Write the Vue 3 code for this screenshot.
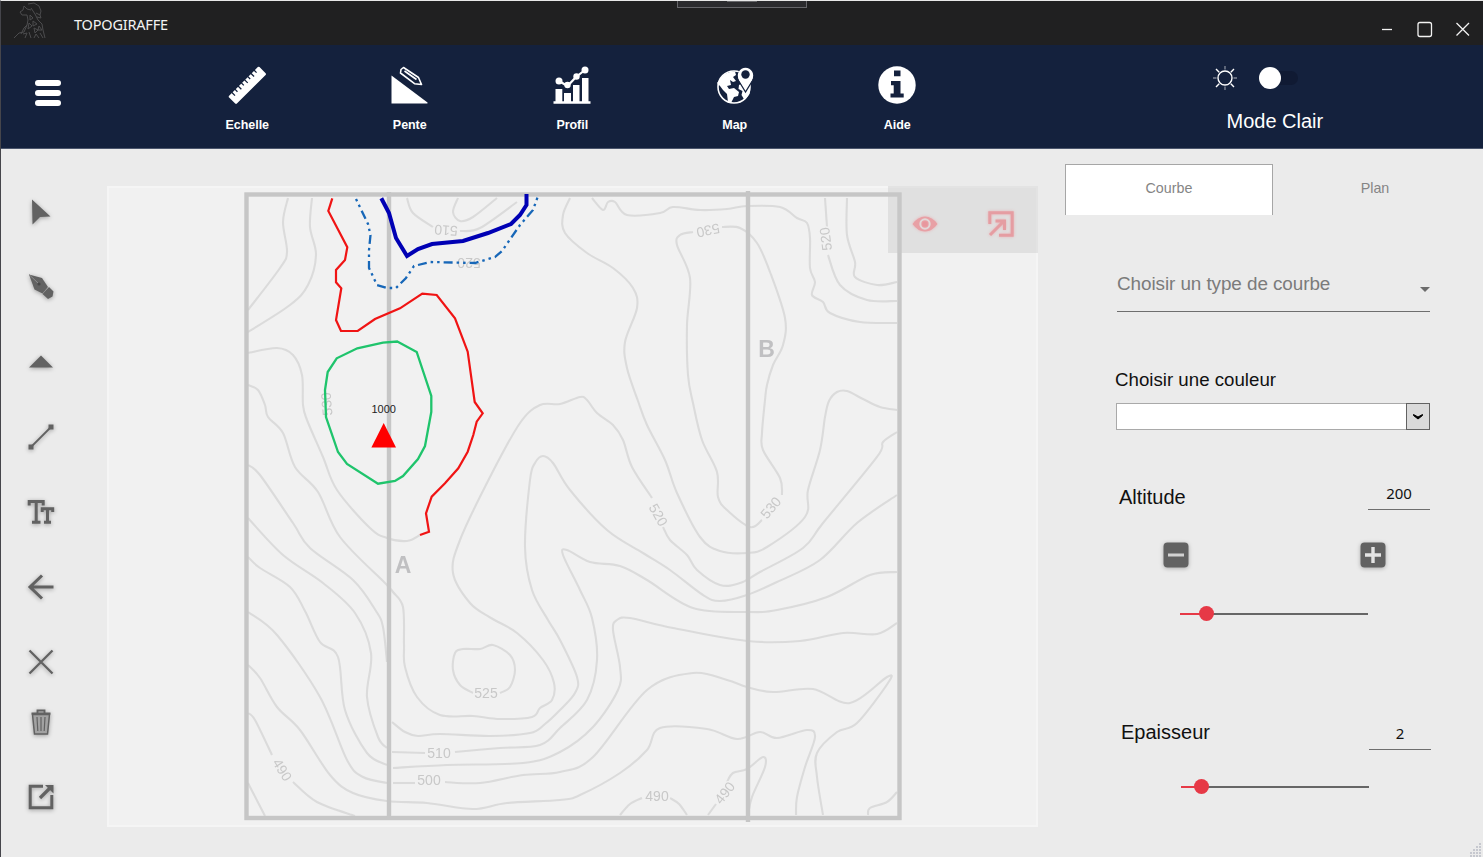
<script setup>
import { ref } from 'vue'

const altitude = ref(200)
const thickness = ref(2)
const activeTab = ref('Courbe')
const tabs = ['Courbe', 'Plan']
const nav = ['Echelle', 'Pente', 'Profil', 'Map', 'Aide']
const tools = ['select', 'pen', 'peak', 'line', 'text', 'back', 'cross', 'trash', 'export']

// Terrain contours, one "x,y x,y ..." list per curve
const terrain = [
  '288,198 283,222 287,252 280,268 248,310',
  '312,198 310,227 316,255 308,285 290,305 248,332',
  '248,353 277,348 293,355 302,375 303,405 307,420 323,457 337,490 370,528 387,538 407,541 420,535',
  '248,385 258,390 265,405 268,417 283,433 295,467 318,492 340,537 385,583 393,592 403,607 404,645 405,667 417,697 440,715 473,716 500,719 532,717 540,708 552,700 554,683 543,660 517,633 491,618 470,603 453,573 460,540 490,477 520,423 540,405 560,404 580,397 587,400 597,413 613,425 623,440 632,467 652,498',
  '663,527 670,540 687,555 697,570 720,585 740,583 760,572 803,548 823,523 877,457 883,442 897,432',
  '248,465 260,475 293,523 310,548 353,580 376,611 383,627 387,662',
  '392,722 405,732 418,736 440,734 490,736 530,733 545,724 560,710 575,693 577,677 560,640 548,620 532,590 525,547 530,480 535,463 543,456 553,463 570,490 607,530 643,553 670,570 703,595 720,601 747,595 777,582 820,560 857,523 897,495',
  '248,518 283,555 323,583 355,613 371,653 367,697 378,737 387,748',
  '392,752 425,753',
  '455,752 500,748 540,745 560,728 587,700 597,660 592,618 580,590 563,555 567,550 590,562 620,566 647,580 693,608 747,612 777,610 827,597 870,575 897,572',
  '248,557 260,568 290,587 305,611 320,642 338,657 345,710 367,753 387,765',
  '393,768 447,765 523,763 560,752 593,727 618,690 620,667 613,630 617,620 630,618 673,628 747,641 800,641 843,633 877,634 897,623',
  '248,612 277,635 320,697 347,760 363,777 387,783',
  '393,783 415,783',
  '445,782 480,783 523,775 560,772 593,757 647,690 693,673 727,680 747,687 773,692 813,689 850,703 887,677 888,683 857,723 837,732 817,753 817,777 823,815',
  '248,665 260,678 277,707 300,730 330,775 353,793 387,801 427,803 473,809 507,803 560,800 580,795 620,773 647,750 660,728 707,729 737,739 760,732 777,738 807,730 815,737 805,767 797,797 796,815',
  '248,713 255,720 272,755',
  '293,782 317,802 355,816',
  '248,783 265,816',
  '620,815 630,804 642,798',
  '670,798 679,804 687,815',
  '708,815 716,804',
  '727,782 733,773 747,769 763,757 765,767 752,797 748,815',
  '868,815 870,808 887,802 897,792',
  '473,693 460,685 453,670 455,653 463,649 480,649 493,645 510,655 515,670 510,687 500,693',
  '407,198 413,213 433,227',
  '460,231 480,228 517,202',
  '458,198 453,212 460,221 473,217 497,198',
  '570,198 563,215 565,233 587,253 613,268 633,288 637,308 625,342 627,368 638,401 647,425 665,460 677,493 700,537 720,551 747,553 767,547 805,517 808,490 820,450 825,417 829,401 837,392 847,391 863,399 880,407 897,410',
  '592,198 603,210 608,202 615,202 627,215 660,213 673,207 700,210 727,209 747,206 780,207 797,218 807,223 810,238 810,268 815,282 812,295 823,302 830,313 860,322 897,323',
  '693,232 680,235 677,245 690,278 687,325 688,375 693,403 702,440 717,472 718,497 727,510 750,527 762,520',
  '782,495 780,478 763,450 762,433 765,400 767,385 773,365 783,345 785,318 770,272 757,243 740,228 722,227',
  '825,198 827,227',
  '828,255 840,285 867,300 897,301',
  '847,198 847,235 855,262 855,277 877,285 897,282'
]

// Catmull-Rom interpolation expressed as cubic Béziers
function smooth(list) {
  const p = list.split(' ').map((s) => s.split(',').map(Number))
  let d = `M${p[0]}`
  for (let i = 0; i < p.length - 1; i++) {
    const a = p[i - 1] || p[i]
    const b = p[i]
    const c = p[i + 1]
    const e = p[i + 2] || c
    d += `C${b[0] + (c[0] - a[0]) / 6},${b[1] + (c[1] - a[1]) / 6} ${c[0] - (e[0] - b[0]) / 6},${c[1] - (e[1] - b[1]) / 6} ${c}`
  }
  return d
}
const contours = terrain.map(smooth)

const labels = [
  { t: '525', x: 486, y: 693, r: 0 },
  { t: '510', x: 439, y: 753, r: 0 },
  { t: '500', x: 429, y: 780, r: 0 },
  { t: '490', x: 282, y: 770, r: 58 },
  { t: '490', x: 657, y: 796, r: 0 },
  { t: '490', x: 725, y: 793, r: -52 },
  { t: '520', x: 658, y: 515, r: 60 },
  { t: '530', x: 771, y: 508, r: -50 },
  { t: '510', x: 446, y: 230, r: 184 },
  { t: '520', x: 469, y: 262, r: 180 },
  { t: '530', x: 708, y: 230, r: 168 },
  { t: '520', x: 826, y: 239, r: 263 },
  { t: '530', x: 327, y: 404, r: 265 }
]
</script>

<template>
  <div class="window">
    <header class="titlebar">
      <svg class="logo" width="34" height="38" viewBox="0 0 34 38">
        <g fill="none" stroke="#4c4c4e" stroke-width="1">
          <path d="M1 36l5-5 5-1 3-7 1-5-1-5-5 0-2-3 3-2 1-4 3 3 4 1M8 32l3-6 3-3M15 2l6-1 5 3 2 5-1 4M23 11l4 2 1 3-4-1M18 6l4 6 3 6 4 4 1 6 2 8" />
          <path d="M17 13l3 3-3 2zM20 19l4 3-4 2zM16 21l3 3-4 3zM21 26l4 2-3 3zM26 24l3 4-4 0zM10 32l4-1-2 5M16 30l2 6M21 36l2-4 3 4M27 31l3 5" />
        </g>
      </svg>
      <span class="app-name">TOPOGIRAFFE</span>
      <div class="grip"><i></i></div>
      <svg class="controls" width="90" height="20" viewBox="0 0 90 20" fill="none" stroke="#f2f2f2" stroke-width="1.3">
        <path d="M1 10.500h10" />
        <rect x="37" y="3.500" width="13.500" height="14" rx="2" />
        <path d="M75.500 4l12.500 12.500M88 4L75.500 16.500" />
      </svg>
    </header>

    <nav class="navbar">
      <button class="burger"><i></i><i></i><i></i></button>
      <div class="nav-items">
        <button v-for="n in nav" :key="n" class="nav-item">
          <svg width="40" height="40" viewBox="0 0 40 40">
            <g v-if="n === 'Echelle'" transform="rotate(-45 20 20)">
              <rect x="-1.500" y="15" width="43" height="11" rx="1.200" fill="#fff" />
              <path d="M4 14v5M8.500 14v4M13 14v5M17.500 14v4M22 14v5M26.500 14v4M31 14v5M35.500 14v4" stroke="#14213d" stroke-width="1.300" />
            </g>
            <g v-else-if="n === 'Pente'">
              <path d="M1.500 10.500L37.500 37.500Q38 38.500 37 38.500H1.500z" fill="#fff" />
              <path d="M11 4.500L13.500 2.500 28.500 12.500l3 7-7-.8L10.500 8zM14.500 6l12 8.500" fill="none" stroke="#fff" stroke-width="1.600" stroke-linejoin="round" />
            </g>
            <g v-else-if="n === 'Profil'" fill="#fff">
              <path d="M1.500 36.300h37v2.500h-37zM3.500 24h6.800v13H3.500zM12 28h7v9h-7zM21 20h6.500v17H21zM30 13h6.500v24H30z" />
              <path d="M7 16l8.500 5L24 12l9-7" fill="none" stroke="#fff" stroke-width="2.200" />
              <circle cx="7" cy="16" r="3.500" /><circle cx="15.500" cy="20" r="3.200" /><circle cx="24.500" cy="11.500" r="3.200" /><circle cx="33" cy="5" r="3.500" />
            </g>
            <g v-else-if="n === 'Map'">
              <circle cx="19" cy="22" r="16" fill="none" stroke="#fff" stroke-width="1.600" />
              <path d="M6 13Q11 6 20 6.500L21 10l-3 2 3 4-3 1-3-2 1 5-4 1 2 3 5-1 5 4-1 4-4 1-3 6-3-1-1-8-4-4-3-4-3-3z" fill="#fff" />
              <path d="M24 20l4-2 3 5 4-3-.5 9-5 6-3-5 1-4-4-2z" fill="#fff" />
              <path d="M30.500 27L23.500 15.500A7.900 7.900 0 1 1 37.500 15.500z" fill="#fff" stroke="#14213d" stroke-width="1.300" />
              <path d="M30.500 24.500L23.700 14A7.700 7.700 0 1 1 37.300 14z" fill="#fff" />
              <circle cx="30.500" cy="9.500" r="4.200" fill="#14213d" />
            </g>
            <g v-else>
              <circle cx="20" cy="20" r="18.700" fill="#fff" />
              <path d="M17 5.500h6.500v5.800H17zM14 16h9.500v12.500h3.200v4H13.500v-4h3.200v-8.300H14z" fill="#14213d" />
            </g>
          </svg>
          <span>{{ n }}</span>
        </button>
      </div>
      <div class="mode">
        <div class="mode-row">
          <svg width="26" height="26" viewBox="0 0 26 26" fill="none" stroke="#fff">
            <circle cx="13" cy="13" r="7" stroke-width="1.400" />
            <path d="M4 4l3.200 3.200M22 4l-3.200 3.200M4 22l3.200-3.200M22 22l-3.200-3.200" stroke-width="1.400" />
            <path d="M13 1v3.500M13 21.500V25M1 13h3.500M21.500 13H25" stroke-opacity=".45" stroke-width="1.400" />
          </svg>
          <span class="toggle"><i></i></span>
        </div>
        <div class="mode-label">Mode Clair</div>
      </div>
    </nav>

    <main class="body">
      <aside class="tools">
        <button v-for="t in tools" :key="t" class="tool" :class="t">
          <svg width="30" height="30" viewBox="0 0 30 30" fill="none" stroke="#626262">
            <path v-if="t === 'select'" d="M6 2.500l18.500 17-10.500.5-7.500 7.500z" fill="#626262" stroke="none" />
            <g v-else-if="t === 'pen'" stroke="none" fill="#626262">
              <path d="M3 2.500l13 3.500 6 9-5.500 6.500-8-4z" />
              <path d="M16.500 22l6.500-7 4.500 4.500-1 5-4.500 2.500z" />
              <path d="M3 2.500l9.500 9" stroke="#8d8d8d" stroke-width="1" /><circle cx="13" cy="12" r="1.600" fill="#484848" />
            </g>
            <path v-else-if="t === 'peak'" d="M3 20.500L15 8.500l12 12z" fill="#626262" stroke="none" />
            <g v-else-if="t === 'line'"><path d="M5 25L25 5" stroke-width="1.800" /><path d="M2.500 22.500h5V27.500h-5zM22.500 2.500h5v5h-5z" fill="#626262" stroke="none" /></g>
            <path v-else-if="t === 'text'" d="M3.200 8.500V4.500h14v4M10.200 4v21M6 25.300h8.500M16.200 15v-3.200h10.500v3.200M21.500 11.500v14M18 25.300h7" stroke-width="3" />
            <path v-else-if="t === 'back'" d="M16 3.500L4 15l12 11.500M4 15h23.500" stroke-width="3" />
            <path v-else-if="t === 'cross'" d="M3.500 3.500l23 23M26.500 3.500l-23 23" stroke-width="2.300" />
            <g v-else-if="t === 'trash'">
              <path d="M6.500 7.500h17L21.500 27h-13z" fill="#a2a2a2" stroke-width="1.500" />
              <path d="M5.500 6.500h19M11.500 6V3.500h7V6" stroke-width="1.900" />
              <path d="M11 10l.8 14M15 10v14M19 10l-.8 14" stroke-width="1.200" />
            </g>
            <g v-else><path d="M17 4.200H4.200v21.600h21.600V13" stroke-width="3" /><path d="M14 16L25 5" stroke-width="3.200" /><path d="M19 3h8.500v8.500z" fill="#626262" stroke="none" /></g>
          </svg>
        </button>
      </aside>

      <section class="canvas">
        <svg class="map" width="931" height="641" viewBox="107 186 931 641">
          <g class="base">
            <g class="terrain">
              <path v-for="(d, i) in contours" :key="i" :d="d" />
            </g>
            <g class="terrain-labels">
              <text v-for="(l, i) in labels" :key="i" :transform="`translate(${l.x} ${l.y}) rotate(${l.r})`" y="4.500">{{ l.t }}</text>
            </g>
            <g class="frame">
              <rect x="246.500" y="194.500" width="653" height="623.500" />
              <path d="M389 192v626M748 191v631" />
            </g>
            <text class="section" x="403" y="573">A</text>
            <text class="section" x="766.500" y="357">B</text>
          </g>
          <g fill="none">
            <path stroke="#f01414" stroke-width="2.200" d="M332.300 198.300L328.300 211 347.300 247.300 345 260 336 270v12.300l5.300 6L336 320l5 11h16.700L375 319l25-10.700 22.300-14.600 14.400 1.300L455 318.300l12.700 33.400 7 50.300 8 11.300-6 8.400-3.400 13.300-5.600 16.700-9.400 16.600-13.300 15-13.300 13.400-5.700 16.600 3 18.400-9 3.300" />
            <path stroke="#1fc46c" stroke-width="2.300" d="M397.300 341.500L416.700 352 431.300 396v16L425 446l-7 13-15 17-8 5-17 2.700L347 464l-9-12-12-35-1-27 2.700-18 9-13.700 20.600-10L383 342.700z" />
            <path stroke="#0000b4" stroke-width="4" d="M381.300 198.300L389 213l7 25 11 18 11-7 14-5 31-3 25-8 23-9 9-9 6.500-10v-11" />
            <path stroke="#1767b8" stroke-width="2.300" stroke-dasharray="2.500 4 2.500 4 9 4" d="M356 199l12 25 2.500 11L369 250v18l8 17 10 3h9l10-10 8-12 16-4 45 1 20-6 7-6 18-26 13-15 5-14" />
          </g>
          <path d="M383.700 423l12.300 24.500h-24.600z" fill="#f00" />
          <text class="summit" x="383.700" y="413">1000</text>
        </svg>
        <div class="overlay">
          <svg width="26" height="18" viewBox="0 0 26 18">
            <path d="M0.500 9Q6 1.500 13 1.500T25.500 9Q20 16.500 13 16.500T.5 9z" fill="#e8a0a5" />
            <circle cx="13" cy="9" r="4.700" fill="none" stroke="#e2d8d8" stroke-width="2" /><circle cx="13" cy="9" r="2.600" fill="#e8979d" />
          </svg>
          <svg width="28" height="28" viewBox="0 0 28 28" fill="none" stroke="#e59da2" stroke-width="3">
            <path d="M2.800 14V2.800h22.400v22.400H12" /><path d="M3 25L16 12M8.500 11h9v9" />
          </svg>
        </div>
      </section>

      <aside class="panel">
        <div class="tabs">
          <button v-for="t in tabs" :key="t" :class="{ active: t === activeTab }" @click="activeTab = t">{{ t }}</button>
        </div>
        <div class="type-select"><span>Choisir un type de courbe</span><i></i></div>
        <div class="color-label">Choisir une couleur</div>
        <div class="combo">
          <span></span>
          <b><svg width="12" height="8" viewBox="0 0 12 8"><path d="M1.500 1.500L6 4l4.500-2.500v1L6 6 1.500 2.500z" fill="#000" stroke="#000" /></svg></b>
        </div>
        <div class="field altitude"><label>Altitude</label><span class="value">{{ altitude }}</span></div>
        <div class="steps">
          <button @click="altitude--"><svg width="26" height="26" viewBox="0 0 26 26"><rect x=".5" y=".5" width="25" height="25" rx="4" fill="#626262" /><path d="M5 13h16" stroke="#d2d2d2" stroke-width="3" /></svg></button>
          <button @click="altitude++"><svg width="26" height="26" viewBox="0 0 26 26"><rect x=".5" y=".5" width="25" height="25" rx="4" fill="#626262" /><path d="M5 13h16M13 5v16" stroke="#e4e4e4" stroke-width="3.400" /></svg></button>
        </div>
        <div class="slider"><i class="done"></i><i class="thumb"></i></div>
        <div class="field thickness"><label>Epaisseur</label><span class="value">{{ thickness }}</span></div>
        <div class="slider second"><i class="done"></i><i class="thumb"></i></div>
      </aside>
      <svg class="resize" width="14" height="14" viewBox="0 0 14 14"><path d="M10 1h2M7 4h2M10 4h2M4 7h2M7 7h2M10 7h2M1 10h2M4 10h2M7 10h2M10 10h2M1 13h2M4 13h2M7 13h2M10 13h2" stroke="#c6c8cf" stroke-width="2" /></svg>
    </main>
  </div>
</template>

<style>
body { margin: 0; overflow: hidden; }
</style>

<style scoped>
* { box-sizing: border-box; }
button { border: 0; padding: 0; background: none; font: inherit; color: inherit; }
svg { display: block; }
.window { width: 1483px; height: 857px; border-left: 1px solid #45454b; border-top: 1px solid #e8e8e8; background: #ebebeb; font-family: "Liberation Sans", Arial, sans-serif; display: flex; flex-direction: column; overflow: hidden; }
.titlebar { position: relative; height: 44px; flex: none; background: #202021; display: flex; align-items: flex-start; }
.logo { margin: 1px 0 0 12px; }
.app-name { margin: 12px 0 0 27px; font: 14.500px/22px "Noto Sans", "Open Sans", sans-serif; letter-spacing: -0.2px; color: #f3f3f3; white-space: nowrap; }
.grip { position: absolute; left: 676px; top: -1px; width: 130px; height: 8px; background: #2b2b2e; border: 1px solid #66666a; border-top: 0; }
.grip i { display: block; width: 30px; height: 1px; margin: 1px auto 0; background: #68686b; }
.controls { margin: 18px 12px 0 auto; }
.navbar { height: 104px; flex: none; background: #14213d; border-bottom: 1px solid #4b566d; display: flex; color: #fff; }
.burger { width: 26px; height: 26px; margin: 35px 0 0 34px; display: flex; flex-direction: column; justify-content: space-between; }
.burger i { height: 6px; border-radius: 3px; background: #fff; }
.nav-items { display: flex; margin-left: 105px; }
.nav-item { width: 162.500px; display: flex; flex-direction: column; align-items: center; padding-top: 20px; }
.nav-item span { margin-top: 12px; font-size: 12.500px; font-weight: 700; letter-spacing: -0.05px; line-height: 16px; }
.mode { width: 160px; margin: 20px 0 0 200px; }
.mode-row { display: flex; align-items: center; height: 26px; margin-left: 33px; }
.toggle { position: relative; width: 36px; height: 14px; margin-left: 24px; border-radius: 7px; background: #101a33; }
.toggle i { position: absolute; left: -3px; top: -4px; width: 22px; height: 22px; border-radius: 50%; background: #fff; }
.mode-label { margin: 18px 0 0 48px; font-size: 20px; line-height: 24px; white-space: nowrap; }
.body { position: relative; display: flex; flex: 1; min-height: 0; }
.tools { width: 106px; flex: none; padding-top: 25px; display: flex; flex-direction: column; }
.tool { height: 75px; width: 80px; flex: none; display: flex; align-items: center; justify-content: center; filter: drop-shadow(0 1px 2px #0005); }
.tool.trash { margin-top: -15px; }
.canvas { position: relative; width: 931px; height: 641px; margin-top: 37px; flex: none; background: #f1f1f1; box-shadow: inset 0 0 0 2px #f5f5f5; }
.base { filter: blur(.6px); }
.terrain { fill: none; stroke: #dbdbdb; stroke-width: 2.100; }
.terrain-labels { font-size: 14px; fill: #c8c8c8; text-anchor: middle; }
.terrain-labels text { stroke: #f1f1f1; stroke-width: 3px; paint-order: stroke; }
.frame { fill: none; stroke: #c6c6c6; stroke-width: 4.400; }
.section { font-size: 23px; font-weight: 700; fill: #c0c0c2; text-anchor: middle; }
.summit { font: 11px "Liberation Sans", sans-serif; fill: #222; text-anchor: middle; }
.overlay { position: absolute; right: 0; top: 0; width: 150px; height: 67px; background: rgba(200, 200, 200, .4); display: flex; align-items: center; padding-top: 9px; padding-left: 24px; gap: 49px; }
.overlay svg { filter: drop-shadow(0 0 1.500px #e8b0b4); }
.panel { width: 444px; flex: none; padding: 15px 0 0 27px; color: #111; }
.tabs { display: flex; }
.tabs button { width: 208px; height: 51px; font-size: 14.300px; color: #858585; padding-bottom: 4px; border: 1px solid transparent; border-bottom: 0; }
.tabs .active { background: #fff; border-color: #a6a6a6; }
.tabs button + button { width: 204px; }
.type-select { margin: 54px 0 0 52px; width: 313px; height: 43px; border-bottom: 1px solid #6e6e6e; display: flex; justify-content: space-between; font-size: 18.900px; letter-spacing: -0.08px; line-height: 30px; color: #7b7b7b; white-space: nowrap; }
.type-select i { width: 0; height: 0; margin-top: 18px; border: 5px solid transparent; border-top-color: #6c6c6c; border-bottom: 0; }
.color-label { margin: 56px 0 0 50px; font-size: 18.700px; line-height: 24px; }
.combo { margin: 11px 0 0 51px; width: 314px; height: 27px; display: flex; background: #fff; border: 1px solid #a9a9a9; }
.combo span { flex: 1; }
.combo b { width: 24px; margin: -1px; background: #dadada; border: 1px solid #626262; display: grid; place-items: center; }
.field { display: flex; justify-content: space-between; white-space: nowrap; }
.field label { font-size: 20px; line-height: 24px; margin-top: 5px; }
.value { width: 62px; height: 30px; border-bottom: 1px solid #6e6e6e; text-align: center; font: 15px/26px "Noto Sans", "Open Sans", sans-serif; }
.altitude { margin: 50px 0 0 54px; width: 311px; }
.steps { display: flex; justify-content: space-between; width: 223px; margin: 32px 0 0 98px; filter: drop-shadow(0 1px 2px #0004); }
.slider { position: relative; margin: 45px 0 0 115px; width: 188px; height: 2px; background: #666; }
.slider .done { position: absolute; left: 0; top: 0; width: 26px; height: 2px; background: #e63946; }
.slider .thumb { position: absolute; left: 19px; top: -7px; width: 15px; height: 15px; border-radius: 50%; background: #e63946; }
.thickness { margin: 105px 0 0 56px; width: 310px; }
.thickness label { margin-top: 0; }
.slider.second { margin: 36px 0 0 116px; }
.slider.second .done { width: 20px; }
.slider.second .thumb { left: 13px; }
.resize { position: absolute; right: 0; bottom: 0; }
</style>
